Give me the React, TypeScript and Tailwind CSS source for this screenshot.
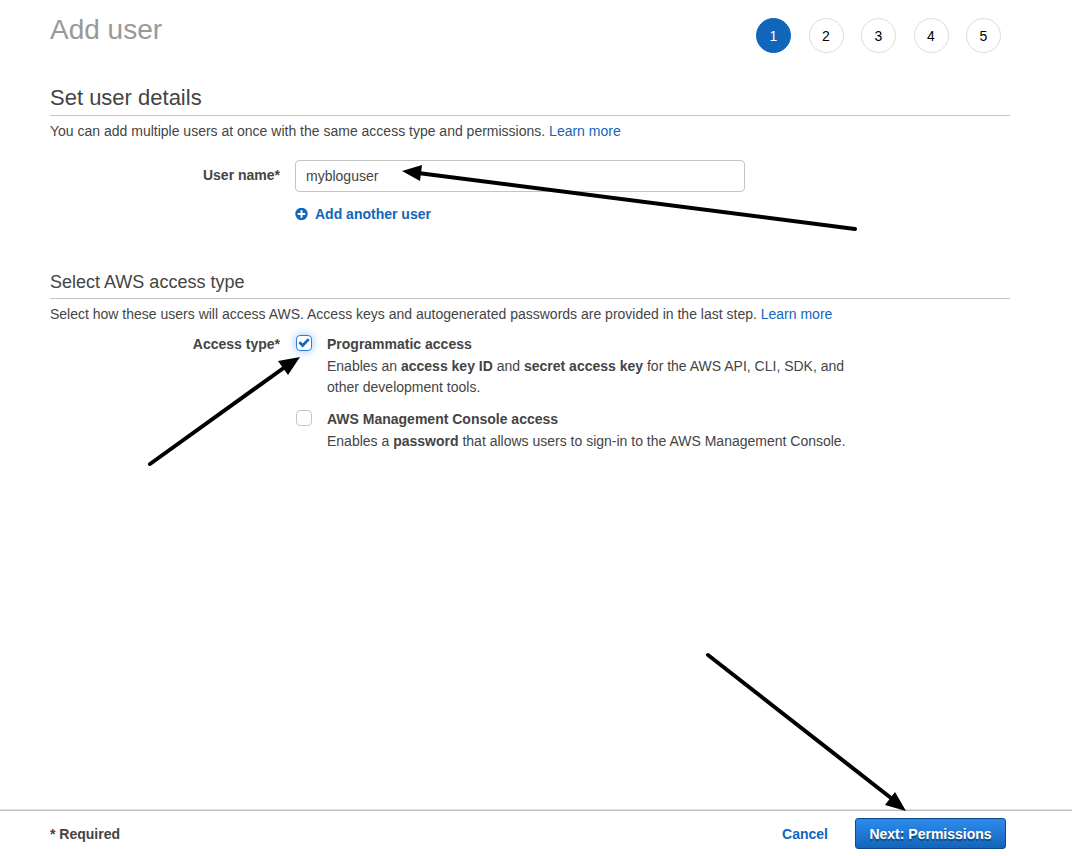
import { useState } from 'react';
import type { ReactNode } from 'react';

interface AccessOptionProps {
  id: string;
  title: string;
  checked: boolean;
  onChange: (checked: boolean) => void;
  children: ReactNode;
}

const steps = [1, 2, 3, 4, 5];

const AccessOption = ({ id, title, checked, onChange, children }: AccessOptionProps) => {
  return (
    <div className="flex items-start">
      <div className="relative mt-0.5 ml-px h-4 w-4 shrink-0">
        <input
          id={id}
          type="checkbox"
          checked={checked}
          onChange={(e) => onChange(e.target.checked)}
          className="block h-4 w-4 appearance-none rounded-[4px] border border-[#c4c4c4] bg-white checked:border-[#2a7fdc] checked:shadow-[0_0_8px_#8cc0f8]"
        />
        {checked && (
          <svg className="pointer-events-none absolute inset-0 h-4 w-4" viewBox="0 0 16 16" aria-hidden="true">
            <path d="M2.4 8.3 4.3 6.3 6.6 8.6 11.8 3.2 13.7 5.1 6.7 12.4Z" fill="#1166bb" />
          </svg>
        )}
      </div>
      <div className="ml-[15px]">
        <label htmlFor={id} className="block leading-[22px] font-bold">
          {title}
        </label>
        <p className="mt-px leading-[21px]">{children}</p>
      </div>
    </div>
  );
};

const App = () => {
  const [step, setStep] = useState(1);
  const [userName, setUserName] = useState('mybloguser');
  const [programmatic, setProgrammatic] = useState(true);
  const [consoleAccess, setConsoleAccess] = useState(false);

  return (
    <div className="flex min-h-screen flex-col bg-white font-['Helvetica_Neue','Liberation_Sans',Arial,sans-serif] text-sm text-[#444444]">
      <main className="flex-1 pr-[62px] pl-[50px]">
        {/* Header */}
        <header className="flex items-start justify-between pt-[18px] pr-[9px]">
          <h1 className="text-[28px] leading-6 text-[#999999]">Add user</h1>
          <nav className="flex w-[245px] justify-between" aria-label="Steps">
            {steps.map((n) => (
              <button
                key={n}
                type="button"
                onClick={() => setStep(n)}
                className={`h-[35px] w-[35px] rounded-full border ${
                  n === step ? 'border-[#1166bb] bg-[#1166bb] text-white' : 'border-[#dddddd] bg-white text-black'
                }`}
              >
                {n}
              </button>
            ))}
          </nav>
        </header>

        {/* User details */}
        <section>
          <h2 className="mt-[27px] border-b border-[#c4c4c4] text-[22px] leading-[35px]">Set user details</h2>
          <p className="mt-[5px] leading-5">
            You can add multiple users at once with the same access type and permissions.{' '}
            <a href="#users" className="text-[#1166bb]">Learn more</a>
          </p>
          <div className="mt-[19px] flex items-start gap-[15px]">
            <label htmlFor="user-name" className="w-[230px] shrink-0 text-right leading-[30px] font-bold">
              User name*
            </label>
            <div className="relative w-[450px]">
              <input
                id="user-name"
                type="text"
                value={userName}
                onChange={(e) => setUserName(e.target.value)}
                className="block h-8 w-full rounded-[4px] border border-[#c4c4c4] px-2.5"
              />
              <button type="button" className="mt-3 flex items-center gap-[7px] leading-5 font-bold text-[#1166bb]">
                <svg className="h-[13px] w-[13px]" viewBox="0 0 13 13" aria-hidden="true">
                  <circle cx="6.5" cy="6" r="6.2" fill="#1166bb" />
                  <path d="M6.5 2.2V9.8M2.7 6H10.3" stroke="white" strokeWidth="2" />
                </svg>
                Add another user
              </button>
              <svg
                className="pointer-events-none absolute top-0 left-[105px] h-[80px] w-[460px]"
                viewBox="0 0 460 80"
                aria-hidden="true"
              >
                <path d="M18 13 455 69" stroke="black" strokeWidth="4" strokeLinecap="round" />
                <path d="M2 11 22 5 20 21Z" fill="black" />
              </svg>
            </div>
          </div>
        </section>

        {/* Access type */}
        <section>
          <h3 className="mt-11 border-b border-[#c4c4c4] pb-0.5 text-lg leading-7">Select AWS access type</h3>
          <p className="mt-[5px] leading-5">
            Select how these users will access AWS. Access keys and autogenerated passwords are provided in the last
            step. <a href="#access" className="text-[#1166bb]">Learn more</a>
          </p>
          <div className="relative mt-[9px] flex items-start gap-[15px]">
            <div className="w-[230px] shrink-0 text-right leading-[22px] font-bold">Access type*</div>
            <div className="flex max-w-[560px] flex-col gap-2.5">
              <AccessOption
                id="programmatic"
                title="Programmatic access"
                checked={programmatic}
                onChange={setProgrammatic}
              >
                Enables an <b>access key ID</b> and <b>secret access key</b> for the AWS API, CLI, SDK, and
                <br />
                other development tools.
              </AccessOption>
              <AccessOption
                id="console"
                title="AWS Management Console access"
                checked={consoleAccess}
                onChange={setConsoleAccess}
              >
                Enables a <b>password</b> that allows users to sign-in to the AWS Management Console.
              </AccessOption>
            </div>
            <svg
              className="pointer-events-none absolute top-5 left-[95px] h-[120px] w-[160px]"
              viewBox="0 0 160 120"
              aria-hidden="true"
            >
              <path d="M5 111 140 14" stroke="black" strokeWidth="4" strokeLinecap="round" />
              <path d="M155 4 133 8 143 22Z" fill="black" />
            </svg>
          </div>
        </section>
      </main>

      {/* Footer */}
      <footer className="relative flex items-center justify-between border-t border-[#e4e4e4] pt-2 pr-[66px] pb-[7px] pl-[50px] font-bold shadow-[inset_0_1px_0_#bbbbbb]">
        <span>* Required</span>
        <div className="flex items-center gap-[27px]">
          <button type="button" className="text-[#1166bb]">Cancel</button>
          <button
            type="button"
            className="h-[31px] w-[151px] rounded-[3px] border border-[#0d4a8c] bg-linear-to-b from-[#2e8bec] to-[#1166bb] text-white [text-shadow:0_2px_1px_#00000066]"
          >
            Next: Permissions
          </button>
        </div>
        <svg
          className="pointer-events-none absolute right-[162px] bottom-[44px] h-[165px] w-[210px]"
          viewBox="0 0 210 165"
          aria-hidden="true"
        >
          <path d="M8 8 191 151" stroke="black" strokeWidth="4" strokeLinecap="round" />
          <path d="M206 164 195 145 185 158Z" fill="black" />
        </svg>
      </footer>
    </div>
  );
};

export default App;
